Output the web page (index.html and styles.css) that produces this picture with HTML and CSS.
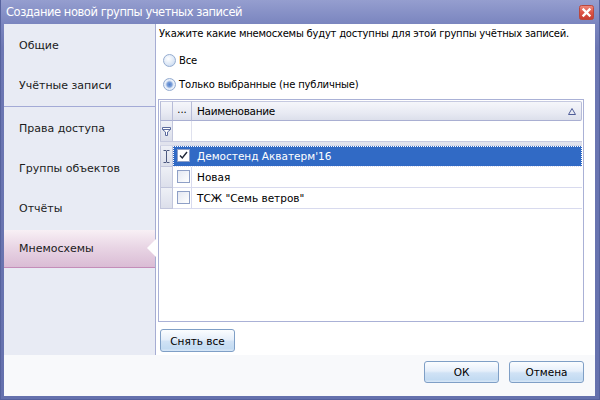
FILE: index.html
```html
<!DOCTYPE html>
<html lang="ru">
<head>
  <meta charset="UTF-8">
  <meta name="viewport" content="width=device-width, initial-scale=1.0">
  <title>Создание новой группы учетных записей</title>
  <link rel="stylesheet" href="styles.css">
</head>
<body>
  <div class="window">
    <div class="titlebar">
      <span class="title">Создание новой группы учетных записей</span>
      <button class="close-btn" title="Закрыть">
        <svg width="15" height="15" viewBox="0 0 15 15">
          <defs>
            <linearGradient id="closeGrad" x1="0" y1="0" x2="0" y2="1">
              <stop offset="0" stop-color="#f08c80"/>
              <stop offset="0.5" stop-color="#dc5346"/>
              <stop offset="1" stop-color="#c63b2f"/>
            </linearGradient>
          </defs>
          <rect x="0.5" y="0.5" width="14" height="14" rx="2" fill="url(#closeGrad)" stroke="#b9483e"/>
          <path d="M4.5 4.5l6 6M10.5 4.5l-6 6" stroke="#fff" stroke-width="2.4" stroke-linecap="square"/>
        </svg>
      </button>
    </div>

    <div class="client">
      <div class="main">
        <!-- Разделы -->
        <ul class="nav">
          <li>Общие</li>
          <li>Учётные записи</li>
          <li class="nav-sep"></li>
          <li>Права доступа</li>
          <li>Группы объектов</li>
          <li>Отчёты</li>
          <li class="active">Мнемосхемы</li>
        </ul>

        <div class="content">
          <p class="hint">Укажите какие мнемосхемы будут доступны для этой группы учётных записей.</p>
          <label class="radio"><span class="radio-dot"></span>Все</label>
          <label class="radio checked"><span class="radio-dot"></span>Только выбранные (не публичные)</label>

          <!-- Таблица мнемосхем -->
          <div class="grid">
            <div class="grid-row grid-head">
              <div class="ind"></div>
              <div class="chk">...</div>
              <div class="name">
                <span>Наименование</span>
                <svg class="sort-icon" width="8" height="7" viewBox="0 0 8 7">
                  <path d="M4 0.5L7.5 6.5H0.5Z" fill="none" stroke="#4f5d98"/>
                </svg>
              </div>
            </div>
            <div class="grid-row grid-filter">
              <div class="ind">
                <svg width="9" height="9" viewBox="0 0 9 9">
                  <path d="M0.5 0.5h8v2l-3 2.5v3.5h-2v-3.5l-3-2.5z" fill="#fff" stroke="#5b6b9e"/>
                  <path d="M0.5 2.5h8" stroke="#5b6b9e"/>
                </svg>
              </div>
              <div class="chk"></div>
              <div class="name"></div>
            </div>
            <div class="grid-sep"></div>

            <div class="grid-row data selected">
              <div class="ind">
                <svg width="7" height="13" viewBox="0 0 7 13">
                  <path d="M0.5 0.5h2.5l0.5 0.5 0.5-0.5h2.5M3.5 1v11M0.5 12.5h2.5l0.5-0.5 0.5 0.5h2.5" stroke="#4c587f" fill="none"/>
                </svg>
              </div>
              <div class="row-body">
                <div class="chk">
                  <span class="checkbox">
                    <svg width="11" height="11" viewBox="0 0 11 11">
                      <path d="M2 5.5l2.3 2.5 4.7-6" stroke="#1f2638" stroke-width="1.4" fill="none"/>
                    </svg>
                  </span>
                </div>
                <div class="name">Демостенд Акватерм'16</div>
              </div>
            </div>
            <div class="grid-row data">
              <div class="ind"></div>
              <div class="row-body">
                <div class="chk"><span class="checkbox"></span></div>
                <div class="name">Новая</div>
              </div>
            </div>
            <div class="grid-row data">
              <div class="ind"></div>
              <div class="row-body">
                <div class="chk"><span class="checkbox"></span></div>
                <div class="name">ТСЖ "Семь ветров"</div>
              </div>
            </div>
          </div>

          <button class="btn btn-clear">Снять все</button>
        </div>
      </div>

      <div class="footer">
        <button class="btn">ОК</button>
        <button class="btn">Отмена</button>
      </div>
    </div>
  </div>
</body>
</html>
```

FILE: styles.css
```css
/* Базовые стили */
body {
  margin: 0;
  font-family: "DejaVu Sans", sans-serif;
  font-size: 10px;
  color: #000;
}

/* Окно */
.window {
  width: 600px;
  height: 400px;
  box-sizing: border-box;
  padding: 0 5px 4px 4px;
  display: flex;
  flex-direction: column;
  background: linear-gradient(#959ecf, #7a85bf 6%, #6c77b3 12%, #6571ad);
  box-shadow: inset 1px 0 #56629e, inset -1px 0 #56629e, inset 0 -1px #56629e;
}

.titlebar {
  height: 24px;
  display: flex;
  align-items: center;
  padding-left: 2px;
}

.title {
  color: #fff;
  font-size: 11.5px;
  letter-spacing: -0.45px;
}

.close-btn {
  margin-left: auto;
  margin-right: 1px;
  margin-top: 1px;
  padding: 0;
  border: none;
  background: none;
  width: 15px;
  height: 15px;
  display: flex;
}

.client {
  flex: 1;
  display: flex;
  flex-direction: column;
  background: #fff;
}

.main {
  height: 331px;
  display: flex;
}

/* Боковое меню */
.nav {
  width: 151px;
  flex-shrink: 0;
  margin: 0;
  padding: 2px 0 0 0;
  list-style: none;
  background: #e8ebf4;
  border-right: 1px solid #a6add3;
}

.nav li {
  height: 40px;
  line-height: 40px;
  padding-left: 15px;
  font-size: 11px;
  color: #1b1b1b;
}

.nav .nav-sep {
  height: 1px;
  margin-bottom: 2px;
  padding: 0;
  background: #a3aad6;
}

.nav .active {
  position: relative;
  box-sizing: border-box;
  height: 38px;
  line-height: 37px;
  margin-top: 1px;
  background: linear-gradient(#f8f0f5, #e9d6e5 45%, #dabcd5);
  border-bottom: 1px solid #c48db9;
}

.nav .active::after {
  content: "";
  position: absolute;
  right: -1px;
  top: 9px;
  border-top: 9px solid transparent;
  border-bottom: 9px solid transparent;
  border-right: 9px solid #fff;
}

/* Содержимое раздела */
.content {
  flex: 1;
  min-width: 0;
  display: flex;
  flex-direction: column;
  align-items: flex-start;
  padding: 2px 11px 0 2px;
}

.hint {
  margin: 0;
  line-height: 16px;
  padding-left: 1px;
  white-space: nowrap;
  letter-spacing: -0.22px;
}

.radio {
  display: flex;
  align-items: center;
  gap: 3px;
  height: 20px;
  padding-left: 5px;
  margin-top: 8px;
  letter-spacing: -0.15px;
}

.radio + .radio {
  margin-top: 4px;
}

.radio-dot {
  width: 13px;
  height: 13px;
  box-sizing: border-box;
  border-radius: 50%;
  border: 1px solid #95acd0;
  background: radial-gradient(circle at 40% 35%, #ffffff, #dbe6f5 60%, #b9cfea);
}

.radio.checked .radio-dot {
  background: radial-gradient(circle, #4f7fcb 0, #7fa2da 2.5px, #c7d7ef 3.5px, #eef3fb 4.5px, #c6d7ee 100%);
}

/* Таблица */
.grid {
  align-self: stretch;
  margin-top: 5px;
  height: 223px;
  box-sizing: border-box;
  border: 1px solid #aab1d6;
  padding: 1px;
  background: #fff;
  font-size: 10.5px;
}

.grid-row {
  display: flex;
  box-sizing: border-box;
}

.ind {
  width: 13px;
  flex-shrink: 0;
  box-sizing: border-box;
  display: flex;
  align-items: center;
  justify-content: center;
}

.chk {
  width: 19px;
  flex-shrink: 0;
  box-sizing: border-box;
}

.name {
  flex: 1;
  box-sizing: border-box;
  padding-left: 5px;
  display: flex;
  align-items: center;
}

.grid-head {
  height: 20px;
}

.grid-head > div {
  background: linear-gradient(#f5f6fa, #e8eaf3 60%, #dcdfeb);
  border-top: 1px solid #c5c9e0;
  border-bottom: 1px solid #a9afd2;
  border-right: 1px solid #b7bcd8;
}

.grid-head .ind {
  border-left: 1px solid #b7bcd8;
}

.grid-head .chk {
  display: flex;
  align-items: center;
  justify-content: center;
  padding-bottom: 4px;
  font-size: 10px;
}

.grid-head .name {
  border-radius: 0 2px 2px 0;
  letter-spacing: -0.3px;
}

.sort-icon {
  margin-left: auto;
  margin-right: 5px;
}

.grid-filter {
  height: 20px;
}

.grid-filter .ind {
  background: linear-gradient(#eef0f6, #dcdfeb);
  border-right: 1px solid #c2c6dc;
  border-left: 1px solid #c2c6dc;
}

.grid-filter .chk {
  border-right: 1px solid #dfe1ee;
}

.grid-sep {
  height: 5px;
  box-sizing: border-box;
  background: #e1e3ed;
  border-top: 1px solid #c6cadf;
  border-bottom: 1px solid #d3d6e6;
}

.data {
  height: 21px;
}

.data .ind {
  background: linear-gradient(#eef0f6, #dcdfeb);
  border-left: 1px solid #c2c6dc;
  border-right: 1px solid #c2c6dc;
  border-bottom: 1px solid #c2c6dc;
}

.row-body {
  flex: 1;
  display: flex;
  box-sizing: border-box;
  border-bottom: 1px solid #d8daee;
}

.data .chk {
  border-right: 1px solid #d8daee;
  padding: 3px 0 0 4px;
}

.checkbox {
  display: flex;
  align-items: center;
  justify-content: center;
  width: 13px;
  height: 13px;
  box-sizing: border-box;
  border: 1px solid #8e9fc6;
  background: linear-gradient(135deg, #e4e8f2, #ffffff);
}

.selected .row-body {
  background: #316ac5;
  color: #fff;
  outline: 1px dotted #fff;
  outline-offset: -1px;
}

.selected .chk {
  border-right-color: #316ac5;
}

.selected .checkbox {
  background: #fff;
}

/* Кнопки */
.btn {
  width: 75px;
  height: 22px;
  padding: 0;
  font-family: "DejaVu Sans", sans-serif;
  font-size: 10.5px;
  color: #000;
  border: 1px solid #7f9fc6;
  border-radius: 3px;
  background: linear-gradient(#fbfdff, #e6effa 45%, #d0e2f5 55%, #c3dbf2 88%, #d9e8f7);
}

.btn-clear {
  margin: 7px 0 0 2px;
  height: 23px;
}

/* Нижняя панель */
.footer {
  flex: 1;
  display: flex;
  justify-content: flex-end;
  align-items: flex-start;
  gap: 10px;
  padding: 6px 11px 0 0;
  background: #f8f9fb;
}
```
